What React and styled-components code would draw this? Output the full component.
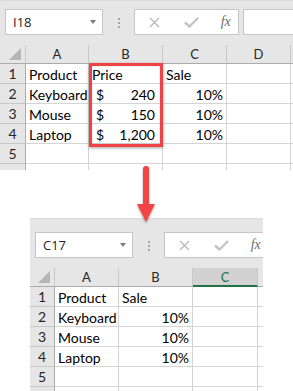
import React from 'react';
import styled, { createGlobalStyle } from 'styled-components';

const GlobalStyle = createGlobalStyle`
  html, body {
    margin: 0;
    padding: 0;
    background: #ffffff;
  }
`;

const RED = '#ef4447';

const firstCols = [26, 63, 74, 64, 64];
const firstRows = [
  ['Product', 'Price', 'Sale', ''],
  ['Keyboard', { amount: '240' }, '10%', ''],
  ['Mouse', { amount: '150' }, '10%', ''],
  ['Laptop', { amount: '1,200' }, '10%', ''],
  ['', '', '', ''],
  ['', '', '', ''],
];

const secondCols = [25, 64, 74, 65];
const secondRows = [
  ['Product', 'Sale', ''],
  ['Keyboard', '10%', ''],
  ['Mouse', '10%', ''],
  ['Laptop', '10%', ''],
  ['', '', ''],
  ['', '', ''],
];

// only the first five rows are fully in view
const VISIBLE_ROWS = 5;

const isNumber = (v) => /^[\d,.]+%?$/.test(v);

const Toolbar = ({ name, top }) => (
  <Bar $top={top}>
    <NameBox>
      <NameText>{name}</NameText>
      <Caret />
    </NameBox>
    <Dots>
      <i />
      <i />
      <i />
    </Dots>
    <FormulaBox>
      <svg width="11" height="11" viewBox="0 0 11 11">
        <path d="M1 1 L10 10 M10 1 L1 10" stroke="#b9b9b9" strokeWidth="1.4" fill="none" />
      </svg>
      <svg width="15" height="11" viewBox="0 0 15 11">
        <path d="M1 5.5 L5.5 9.5 L14 1" stroke="#c4c4c4" strokeWidth="2.4" fill="none" />
      </svg>
      <Fx>fx</Fx>
    </FormulaBox>
    <InputBox />
  </Bar>
);

const Grid = ({ cols, letters, active, rows, height, children }) => (
  <Sheet $cols={cols.map((c) => c + 'px').join(' ') + ' 1fr'} $height={height}>
    <Corner>
      <svg width="12" height="12" viewBox="0 0 12 12">
        <path d="M12 0 L12 12 L0 12 Z" fill="#b5b5b5" />
      </svg>
    </Corner>
    {letters.map((l) => (
      <ColHead key={l} $active={l === active}>{l}</ColHead>
    ))}
    <ColHead />
    {rows.map((row, r) => (
      <React.Fragment key={r}>
        <RowHead>{r < VISIBLE_ROWS ? r + 1 : ''}</RowHead>
        {row.map((v, c) =>
          typeof v === 'object' ? (
            <Money key={c}>
              <span>$</span>
              <span>{v.amount}</span>
            </Money>
          ) : (
            <Cell key={c} $right={isNumber(v)}>{v}</Cell>
          )
        )}
        <Cell />
      </React.Fragment>
    ))}
    {children}
  </Sheet>
);

const App = () => {
  return (
    <Page>
      <GlobalStyle />
      <Shot>
        <Toolbar name="I18" top={9} />
        <Grid cols={firstCols} letters={['A', 'B', 'C', 'D']} rows={firstRows} height={125}>
          <Highlight />
        </Grid>
      </Shot>
      <Gap>
        <Arrow width="22" height="60" viewBox="0 0 22 60">
          <defs>
            <filter id="sh" x="-50%" y="-20%" width="200%" height="140%">
              <feDropShadow dx="0" dy="1.5" stdDeviation="1.2" floodColor="#000" floodOpacity="0.35" />
            </filter>
          </defs>
          <g filter="url(#sh)">
            <rect x="8" y="1" width="6" height="42" rx="3" fill={RED} />
            <path d="M2 39 L20 39 L11 57 Z" fill={RED} />
          </g>
        </Arrow>
      </Gap>
      <Shot $width={233} $indent={30}>
        <Toolbar name="C17" top={14} />
        <Grid cols={secondCols} letters={['A', 'B', 'C']} active="C" rows={secondRows} height={123} />
      </Shot>
    </Page>
  );
};

const Page = styled.div`
  width: 293px;
  height: 391px;
  overflow: hidden;
  background: #ffffff;
  font-family: Lato, 'Liberation Sans', sans-serif;
`;

const Shot = styled.div`
  width: ${(p) => p.$width || 293}px;
  margin-left: ${(p) => p.$indent || 0}px;
  overflow: hidden;
  background: #e6e6e6;
`;

const Bar = styled.div`
  display: flex;
  align-items: flex-start;
  width: 320px;
  height: ${(p) => p.$top + 36}px;
  padding: ${(p) => p.$top}px 0 0 5px;
  box-sizing: border-box;
  background: #e6e6e6;
  box-shadow: inset 0 2px 2px -1px rgba(0, 0, 0, 0.06);
`;

const NameBox = styled.div`
  display: flex;
  align-items: center;
  justify-content: space-between;
  width: 101px;
  height: 26px;
  box-sizing: border-box;
  padding: 0 6px 0 7px;
  background: #ffffff;
  border: 1px solid #c6c6c6;
`;

const NameText = styled.span`
  font-family: 'Open Sans', 'Noto Sans', sans-serif;
  font-size: 13px;
  color: #222;
`;

const Caret = styled.span`
  width: 0;
  height: 0;
  border-left: 3.5px solid transparent;
  border-right: 3.5px solid transparent;
  border-top: 4px solid #7a7a7a;
`;

const Dots = styled.div`
  display: flex;
  flex-direction: column;
  gap: 2px;
  margin: 9px 14px 0 15px;

  i {
    display: block;
    width: 2px;
    height: 2px;
    background: #a6a6a6;
  }
`;

const FormulaBox = styled.div`
  display: flex;
  align-items: center;
  width: 109px;
  height: 26px;
  box-sizing: border-box;
  padding: 0 0 0 14px;
  gap: 24px;
  background: #ffffff;
  border: 1px solid #c6c6c6;
`;

const Fx = styled.span`
  font-family: 'Liberation Serif', 'DejaVu Serif', serif;
  font-style: italic;
  font-size: 14px;
  color: #6e6e6e;
  margin-left: -2px;
`;

const InputBox = styled.div`
  width: 80px;
  height: 26px;
  margin-left: 4px;
  box-sizing: border-box;
  background: #ffffff;
  border: 1px solid #c6c6c6;
`;

const Sheet = styled.div`
  position: relative;
  display: grid;
  grid-template-columns: ${(p) => p.$cols};
  grid-template-rows: 19px;
  grid-auto-rows: 20px;
  height: ${(p) => p.$height}px;
  overflow: hidden;
  background: #ffffff;
`;

const Corner = styled.div`
  display: flex;
  align-items: flex-end;
  justify-content: flex-end;
  padding: 0 4px 3px 0;
  background: #e6e6e6;
  border-right: 1px solid #c8c8c8;
  border-bottom: 1px solid #ababab;
`;

const ColHead = styled.div`
  display: flex;
  align-items: center;
  justify-content: center;
  box-sizing: border-box;
  font-size: 13px;
  color: ${(p) => (p.$active ? '#217346' : '#262626')};
  background: ${(p) => (p.$active ? '#d2d2d2' : '#e6e6e6')};
  border-right: 1px solid #c8c8c8;
  border-bottom: ${(p) => (p.$active ? '2px solid #217346' : '1px solid #ababab')};
`;

const RowHead = styled.div`
  display: flex;
  align-items: center;
  justify-content: center;
  font-size: 14px;
  color: #262626;
  background: #e6e6e6;
  border-right: 1px solid #ababab;
  border-bottom: 1px solid #c8c8c8;
`;

const Cell = styled.div`
  display: flex;
  align-items: center;
  justify-content: ${(p) => (p.$right ? 'flex-end' : 'flex-start')};
  padding: 1px 3px 0 3px;
  font-size: 14px;
  color: #000;
  white-space: nowrap;
  border-right: 1px solid #d4d4d4;
  border-bottom: 1px solid #d4d4d4;
`;

const Money = styled(Cell)`
  justify-content: space-between;
  padding: 1px 7px 0 7px;
`;

const Highlight = styled.div`
  position: absolute;
  left: 89px;
  top: 18px;
  width: 74px;
  height: 84px;
  box-sizing: border-box;
  border: 3px solid ${RED};
  box-shadow: 0 1px 3px rgba(0, 0, 0, 0.35), inset 0 0 2px rgba(0, 0, 0, 0.2);
`;

const Gap = styled.div`
  position: relative;
  height: 48px;
`;

const Arrow = styled.svg`
  position: absolute;
  left: 135px;
  top: -5px;
  z-index: 2;
`;

export default App;
